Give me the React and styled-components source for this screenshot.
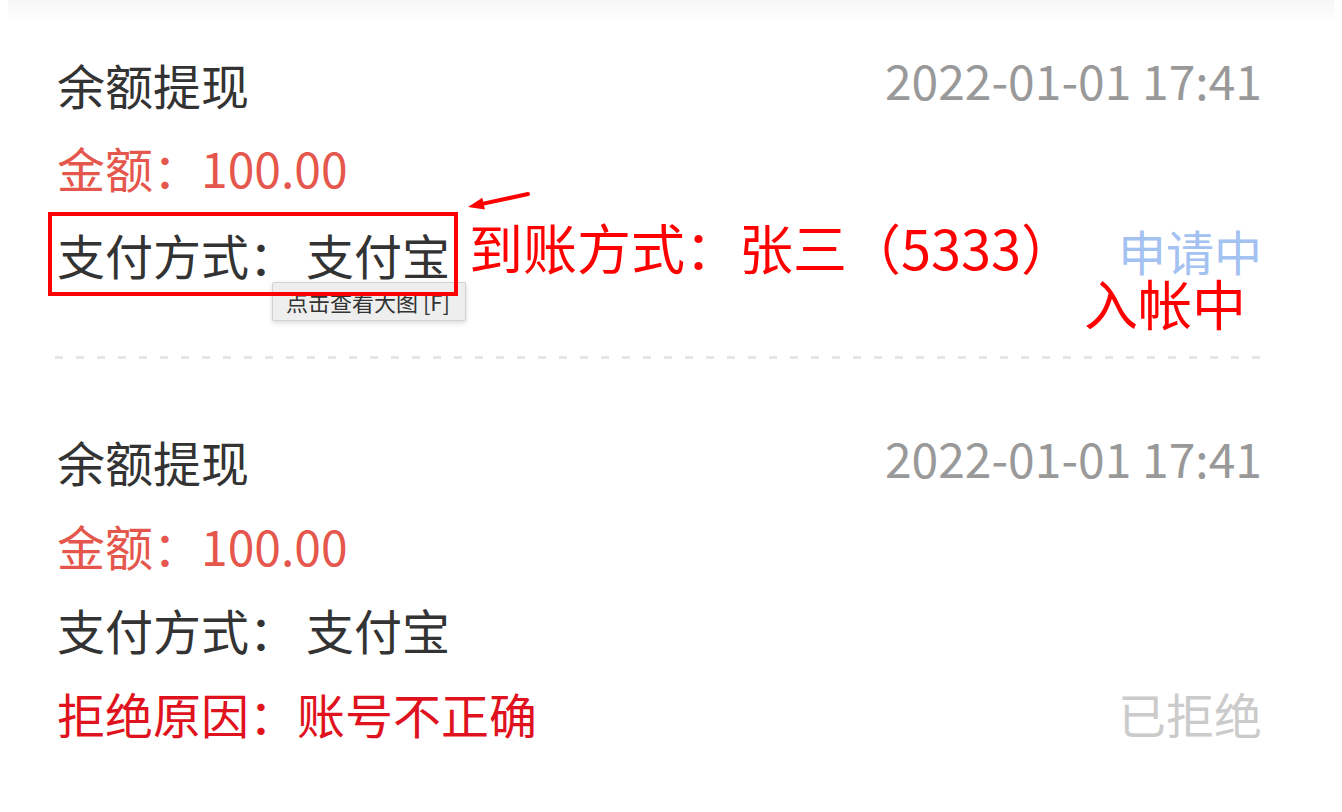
import React from "react";
import styled, { createGlobalStyle } from "styled-components";

const GlobalStyle = createGlobalStyle`
  body {
    margin: 0;
    background: #fff;
    font-family: "Noto Sans CJK SC", "Noto Sans", sans-serif;
  }
`;

const records = [
  {
    id: 1,
    title: "余额提现",
    time: "2022-01-01 17:41",
    amount: "100.00",
    pay: "支付宝",
    status: "申请中",
    annotated: true,
  },
  {
    id: 2,
    title: "余额提现",
    time: "2022-01-01 17:41",
    amount: "100.00",
    pay: "支付宝",
    status: "已拒绝",
    reason: "账号不正确",
  },
];

const App = () => {
  return (
    <Page>
      <GlobalStyle />
      <TopShade />
      {records.map((r, i) => (
        <React.Fragment key={r.id}>
          {i > 0 && <Divider />}
          <Card
            $top={i === 0 ? 20 : 60}
            $bottom={i === 0 ? 65 : 40}
            $pitch={i === 0 ? 83 : 84}
          >
            <Row>
              <Title>{r.title}</Title>
              <Time>{r.time}</Time>
            </Row>
            <Row>
              <Amount>金额：{r.amount}</Amount>
            </Row>
            <Row>
              {r.annotated ? (
                <Left>
                  <Boxed>
                    支付方式：<PayValue>{r.pay}</PayValue>
                    <Tooltip>点击查看大图 [F]</Tooltip>
                  </Boxed>
                  <Note>
                    <Arrow width="64" height="24" viewBox="0 0 64 24">
                      <line
                        x1="62"
                        y1="5"
                        x2="14"
                        y2="15.4"
                        stroke="#ff0000"
                        strokeWidth="4"
                        strokeLinecap="round"
                      />
                      <polygon points="2,18 16.3,8.7 18.9,20.5" fill="#ff0000" />
                    </Arrow>
                    到账方式：张三（5333）
                  </Note>
                </Left>
              ) : (
                <Title>
                  支付方式：<PayValue>{r.pay}</PayValue>
                </Title>
              )}
              {!r.reason && (
                <StatusCell>
                  <Status $tone="pending">{r.status}</Status>
                  {r.annotated && <StatusNote>入帐中</StatusNote>}
                </StatusCell>
              )}
            </Row>
            {r.reason && (
              <Row>
                <Reason>拒绝原因：{r.reason}</Reason>
                <Status $tone="rejected">{r.status}</Status>
              </Row>
            )}
          </Card>
        </React.Fragment>
      ))}
    </Page>
  );
};

const Page = styled.div`
  width: 1342px;
  height: 812px;
  overflow: hidden;
  background: #fff;
`;

const TopShade = styled.div`
  height: 22px;
  background: linear-gradient(#f6f6f6, #fbfbfb 60%, #fff);
  margin: 0 8px;
`;

const Card = styled.div`
  --pitch: ${(p) => p.$pitch}px;
  display: flex;
  flex-direction: column;
  padding: ${(p) => p.$top}px 80px ${(p) => p.$bottom}px 57px;
`;

const Row = styled.div`
  display: flex;
  align-items: center;
  justify-content: space-between;
  height: var(--pitch);
  font-size: 48px;
  line-height: 1;
  white-space: nowrap;
`;

const Title = styled.span`
  color: #333;
`;

const PayValue = styled.span`
  margin-left: 9px;
`;

const Time = styled.span`
  color: #999;
  padding-bottom: 9px;
`;

const Amount = styled.span`
  color: #e5574c;
`;

const Reason = styled.span`
  color: #e0121e;
`;

const Left = styled.div`
  display: flex;
  align-items: center;
`;

const Boxed = styled.span`
  position: relative;
  display: inline-block;
  color: #333;
  line-height: 84px;
  padding: 0 8px 0 9px;
  margin-left: -9px;
  margin-top: 8px;
  &::after {
    content: "";
    position: absolute;
    inset: 0;
    border: 4px solid #ff0000;
    z-index: 2;
  }
`;

const Tooltip = styled.span`
  position: absolute;
  left: 224px;
  top: 70px;
  z-index: 1;
  font-size: 22px;
  line-height: 37px;
  padding: 0 15px 0 13px;
  color: #333;
  background: #eeeeee;
  border: 1px solid #d2d2d2;
  border-radius: 2px;
  box-shadow: 0 2px 5px rgba(0, 0, 0, 0.15);
`;

const Note = styled.span`
  position: relative;
  margin-left: 11px;
  margin-bottom: 6px;
  font-size: 54px;
  color: #ff0000;
`;

const Arrow = styled.svg`
  position: absolute;
  left: -3px;
  top: -31px;
`;

const StatusCell = styled.span`
  position: relative;
`;

const Status = styled.span`
  color: ${(p) => (p.$tone === "pending" ? "#a3c1f1" : "#cbcbcb")};
`;

const StatusNote = styled.span`
  position: absolute;
  right: 16px;
  top: calc(100% + 2px);
  font-size: 54px;
  line-height: 1;
  color: #ff0000;
`;

const Divider = styled.div`
  height: 3px;
  margin: 0 77px 0 55px;
  background: repeating-linear-gradient(
    90deg,
    #e6e6e6 0 8px,
    transparent 8px 21px
  );
`;

export default App;
